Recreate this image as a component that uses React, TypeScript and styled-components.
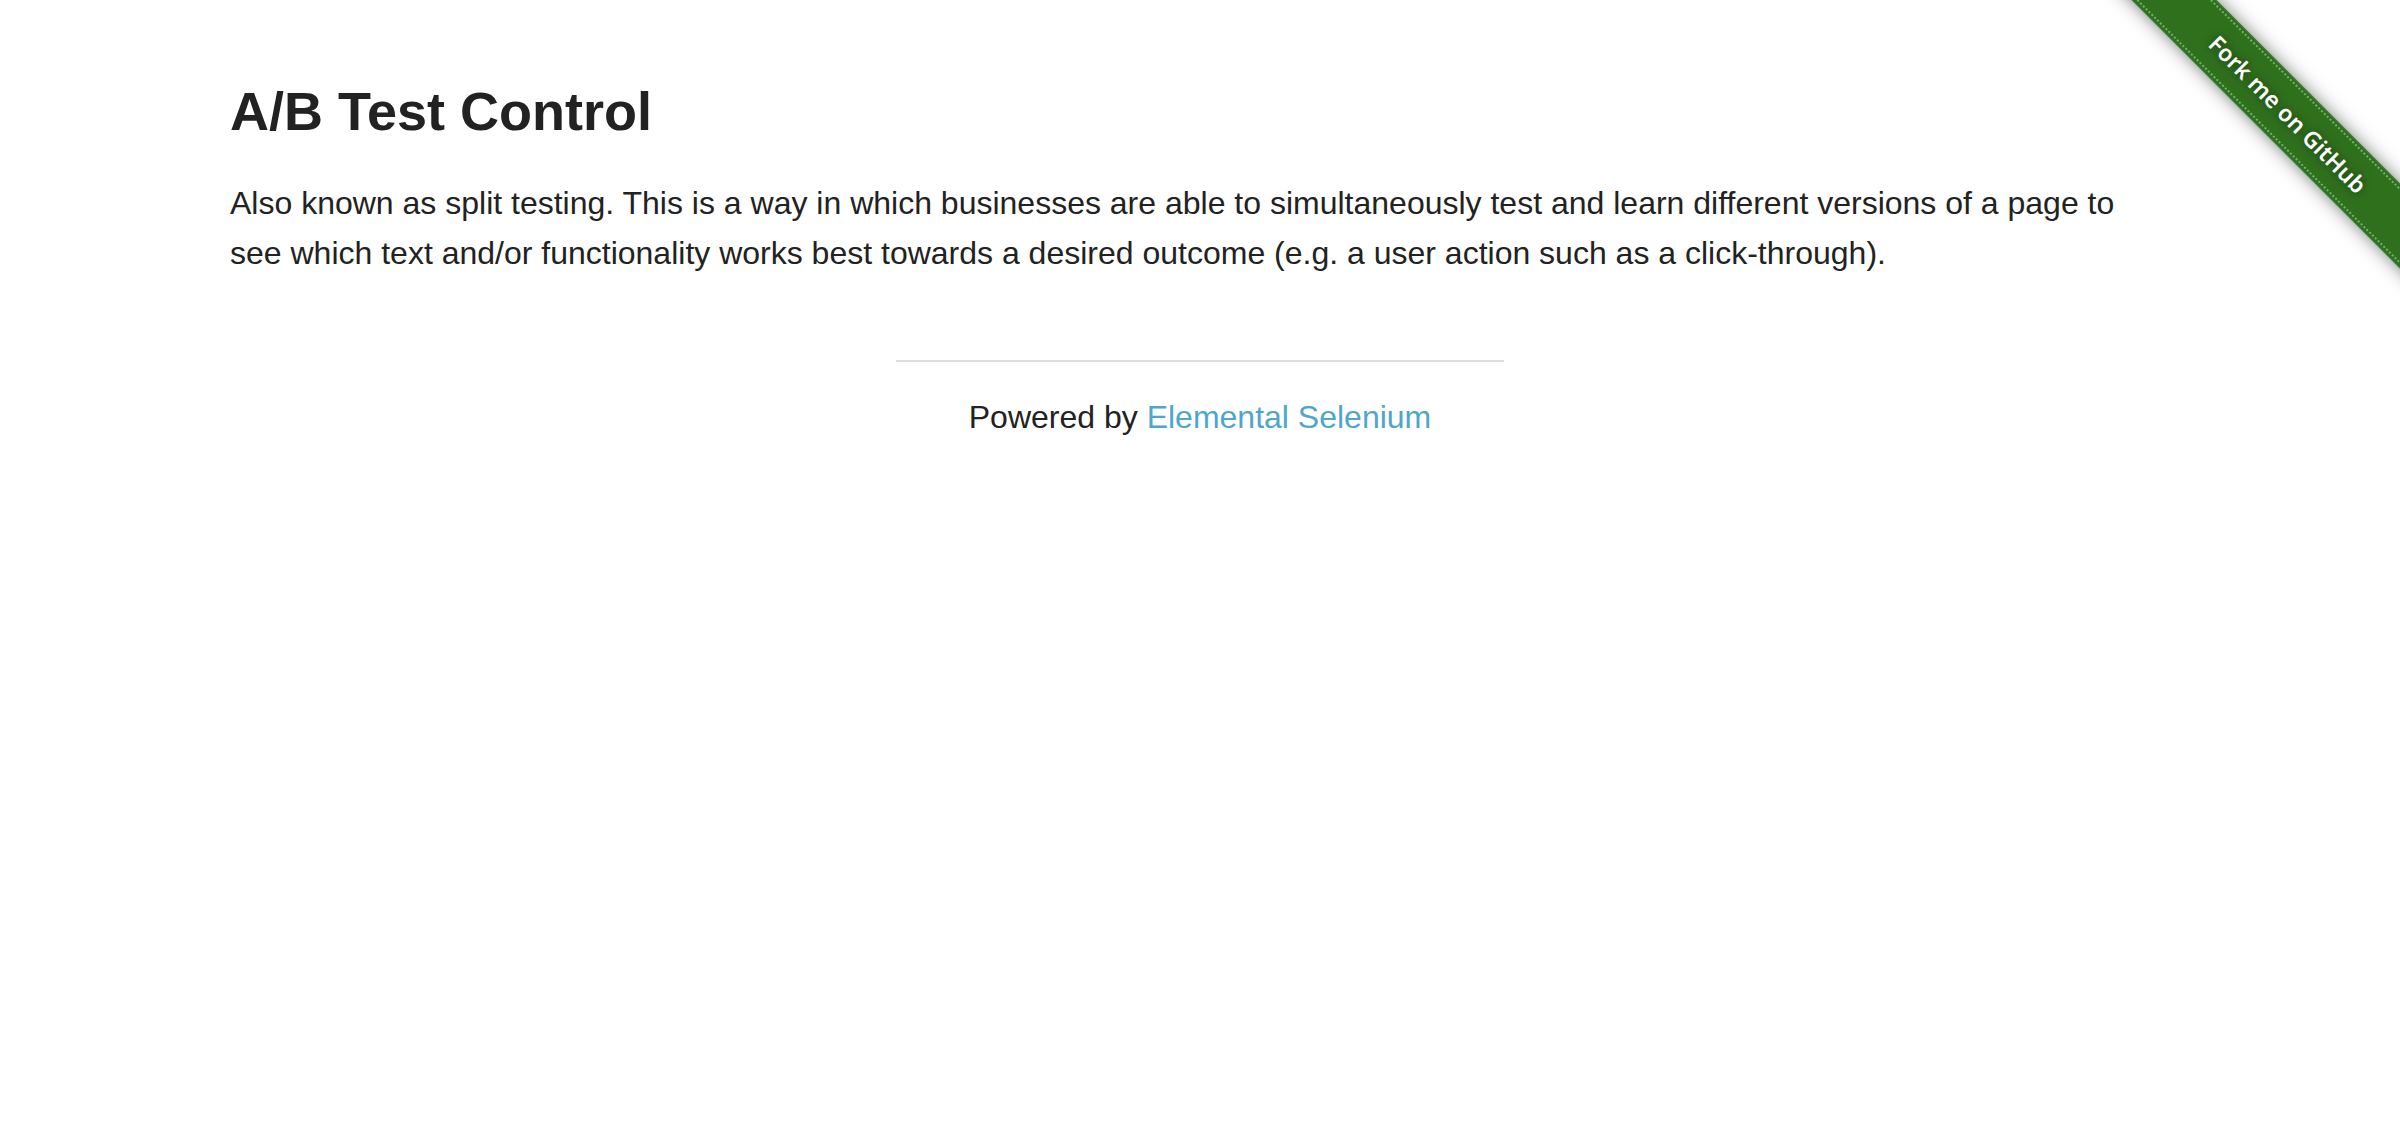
import React from "react";
import styled, { createGlobalStyle } from "styled-components";

const GlobalStyle = createGlobalStyle`
  *, *::before, *::after { box-sizing: border-box; }
  body {
    margin: 0;
    background: #fff;
    color: #222;
    font-family: "Helvetica Neue", Helvetica, "Liberation Sans", Arial, sans-serif;
    font-size: 32px;
    line-height: 50px;
  }
`;

const Page = styled.div`
  position: relative;
  overflow-x: hidden;
`;

const Row = styled.main`
  max-width: 2000px;
  margin: 0 auto;
  padding: 72px 30px 0;
`;

const Title = styled.h1`
  margin: 0 0 28px;
  font-size: 54px;
  line-height: 78px;
  font-weight: 700;
`;

const Text = styled.p`
  margin: 0;
`;

const Footer = styled.footer`
  max-width: 608px;
  margin: 82px auto 0;
  padding-top: 30px;
  border-top: 2px solid #ddd;
  text-align: center;
`;

const FooterLink = styled.a`
  color: #4fa6cb;
  text-decoration: none;
`;

const RibbonLink = styled.a`
  position: absolute;
  top: 0;
  right: 0;
  width: 298px;
  height: 298px;
  overflow: hidden;
  pointer-events: none;
  text-decoration: none;
`;

const RibbonBand = styled.span`
  position: absolute;
  top: 84px;
  left: -34px;
  width: 440px;
  height: 60px;
  padding: 2px 0;
  transform: rotate(45deg);
  background: #2f701d;
  border: 1px solid #3c8338;
  box-shadow: 0 0 18px rgba(0, 0, 0, 0.5);
  pointer-events: auto;
`;

const RibbonStitch = styled.span`
  display: flex;
  align-items: center;
  justify-content: center;
  height: 100%;
  border: dotted #72b070;
  border-width: 2px 0;
  color: #fff;
  font-family: "Noto Sans", "Open Sans", sans-serif;
  font-size: 23px;
  font-weight: 600;
  text-shadow: 0 0 8px rgba(0, 0, 0, 0.5);
`;

export default function App() {
  return (
    <>
      <GlobalStyle />
      <Page>
        <RibbonLink href="https://github.com/tourdedave/the-internet">
          <RibbonBand>
            <RibbonStitch>Fork me on GitHub</RibbonStitch>
          </RibbonBand>
        </RibbonLink>
        <Row>
          <Title>A/B Test Control</Title>
          <Text>
            Also known as split testing. This is a way in which businesses are
            able to simultaneously test and learn different versions of a page
            to see which text and/or functionality works best towards a desired
            outcome (e.g. a user action such as a click-through).
          </Text>
        </Row>
        <Footer>
          Powered by{" "}
          <FooterLink href="http://elementalselenium.com/">
            Elemental Selenium
          </FooterLink>
        </Footer>
      </Page>
    </>
  );
}
